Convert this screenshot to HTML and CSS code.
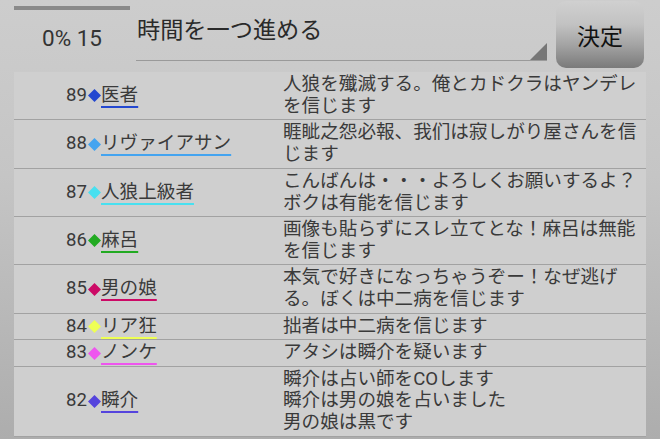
FILE: index.html
```html
<!DOCTYPE html>
<html lang="ja">
<head>
<meta charset="utf-8">
<link rel="stylesheet" href="styles.css">
</head>
<body>
<div class="header">
  <div class="progress">
    <div class="bar"></div>
    <div class="pct">0% 15</div>
  </div>
  <div class="spinner">
    <div class="spin-text">時間を一つ進める</div>
    <div class="tri"></div>
  </div>
  <div class="btn">決定</div>
</div>
<div class="table">
  <div class="row">
    <div class="who"><span class="num">89</span><svg class="dia c89" viewBox="0 0 13 13"><polygon points="6.5,0 13,6.5 6.5,13 0,6.5"/></svg><span class="name c89">医者</span></div>
    <div class="msg">人狼を殲滅する。俺とカドクラはヤンデレを信じます</div>
  </div>
  <div class="row">
    <div class="who"><span class="num">88</span><svg class="dia c88" viewBox="0 0 13 13"><polygon points="6.5,0 13,6.5 6.5,13 0,6.5"/></svg><span class="name c88">リヴァイアサン</span></div>
    <div class="msg">睚眦之怨必報、我们は寂しがり屋さんを信じます</div>
  </div>
  <div class="row">
    <div class="who"><span class="num">87</span><svg class="dia c87" viewBox="0 0 13 13"><polygon points="6.5,0 13,6.5 6.5,13 0,6.5"/></svg><span class="name c87">人狼上級者</span></div>
    <div class="msg">こんばんは・・・よろしくお願いするよ？ボクは有能を信じます</div>
  </div>
  <div class="row">
    <div class="who"><span class="num">86</span><svg class="dia c86" viewBox="0 0 13 13"><polygon points="6.5,0 13,6.5 6.5,13 0,6.5"/></svg><span class="name c86">麻呂</span></div>
    <div class="msg">画像も貼らずにスレ立てとな！麻呂は無能を信じます</div>
  </div>
  <div class="row">
    <div class="who"><span class="num">85</span><svg class="dia c85" viewBox="0 0 13 13"><polygon points="6.5,0 13,6.5 6.5,13 0,6.5"/></svg><span class="name c85">男の娘</span></div>
    <div class="msg">本気で好きになっちゃうぞー！なぜ逃げる。ぼくは中二病を信じます</div>
  </div>
  <div class="row">
    <div class="who"><span class="num">84</span><svg class="dia c84" viewBox="0 0 13 13"><polygon points="6.5,0 13,6.5 6.5,13 0,6.5"/></svg><span class="name c84">リア狂</span></div>
    <div class="msg">拙者は中二病を信じます</div>
  </div>
  <div class="row">
    <div class="who"><span class="num">83</span><svg class="dia c83" viewBox="0 0 13 13"><polygon points="6.5,0 13,6.5 6.5,13 0,6.5"/></svg><span class="name c83">ノンケ</span></div>
    <div class="msg">アタシは瞬介を疑います</div>
  </div>
  <div class="row">
    <div class="who"><span class="num">82</span><svg class="dia c82" viewBox="0 0 13 13"><polygon points="6.5,0 13,6.5 6.5,13 0,6.5"/></svg><span class="name c82">瞬介</span></div>
    <div class="msg">瞬介は占い師をCOします<br>瞬介は男の娘を占いました<br>男の娘は黒です</div>
  </div>
</div>
</body>
</html>
```
FILE: styles.css
```css
html, body {
  margin: 0;
  padding: 0;
}
body {
  width: 660px;
  height: 439px;
  overflow: hidden;
  background: linear-gradient(180deg, #cdcdcd 0%, #c5c5c5 40%, #adadad 100%);
  font-family: Roboto, "Noto Sans CJK JP", sans-serif;
  color: #3a3a3a;
}
.header {
  display: flex;
  height: 72px;
  padding-left: 14px;
  box-sizing: border-box;
}
.progress {
  width: 116px;
  display: flex;
  flex-direction: column;
  align-items: center;
  padding-top: 6px;
}
.bar {
  width: 100%;
  height: 4px;
  background: #8a8a8a;
}
.pct {
  margin-top: 14px;
  font-size: 22.5px;
  line-height: 28px;
  color: #333;
}
.spinner {
  margin-left: 6px;
  width: 411px;
  height: 60px;
  border-bottom: 1.5px solid #9a9a9a;
  display: flex;
  justify-content: space-between;
  align-items: flex-end;
}
.spin-text {
  align-self: flex-start;
  padding-top: 18px;
  padding-left: 1px;
  font-size: 23.2px;
  line-height: 25px;
  color: #2a2a2a;
}
.tri {
  width: 17px;
  height: 17px;
  background: #777;
  clip-path: polygon(100% 0, 100% 100%, 0 100%);
}
.btn {
  margin-left: 9px;
  margin-top: 1px;
  width: 88px;
  height: 67px;
  border-radius: 10px;
  background: linear-gradient(180deg, #d0d0d0 0%, #c2c2c2 35%, #a4a4a4 65%, #7a7a7a 100%);
  display: flex;
  align-items: center;
  justify-content: center;
  font-size: 23px;
  color: #111;
}
.table {
  margin-left: 14px;
  width: 632px;
  background: #cfcfcf;
}
.row {
  display: grid;
  grid-template-columns: 269px 1fr;
  border-bottom: 1px solid #a2a2a2;
  padding: 2px 0 1.65px;
  font-size: 18.6px;
  line-height: 21.85px;
}
.who {
  display: flex;
  align-items: center;
}
.num {
  width: 73px;
  text-align: right;
}
.dia {
  width: 13px;
  height: 13px;
  margin: 0 0.5px;
  fill: currentColor;
}
.name {
  text-decoration: underline;
  text-decoration-thickness: 2px;
  text-underline-offset: 5px;
  color: #3a3a3a;
}
.msg {
  color: #3a3a3a;
}
.dia.c89 { color: #2448d0; }
.name.c89 { text-decoration-color: #2448d0; }
.dia.c88 { color: #44a4f0; }
.name.c88 { text-decoration-color: #44a4f0; }
.dia.c87 { color: #48e0f0; }
.name.c87 { text-decoration-color: #48e0f0; }
.dia.c86 { color: #22aa22; }
.name.c86 { text-decoration-color: #22aa22; }
.dia.c85 { color: #cc0a66; }
.name.c85 { text-decoration-color: #cc0a66; }
.dia.c84 { color: #eeff55; }
.name.c84 { text-decoration-color: #eeff55; }
.dia.c83 { color: #ee55ee; }
.name.c83 { text-decoration-color: #ee55ee; }
.dia.c82 { color: #5544dd; }
.name.c82 { text-decoration-color: #5544dd; }
```
